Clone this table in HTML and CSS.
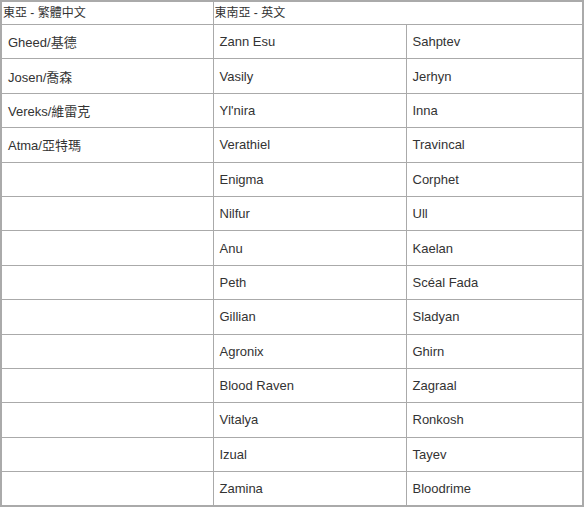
FILE: index.html
```html
<!DOCTYPE html>
<html>
<head>
<meta charset="utf-8">
<link rel="stylesheet" href="styles.css">
</head>
<body>
<table class="servers">
  <colgroup>
    <col class="c1"><col class="c2"><col class="c3">
  </colgroup>
  <thead>
    <tr class="head"><th>東亞 - 繁體中文</th><th colspan="2">東南亞 - 英文</th></tr>
  </thead>
  <tbody>
    <tr><td>Gheed/基德</td><td>Zann Esu</td><td>Sahptev</td></tr>
    <tr><td>Josen/喬森</td><td>Vasily</td><td>Jerhyn</td></tr>
    <tr><td>Vereks/維雷克</td><td>Yl'nira</td><td>Inna</td></tr>
    <tr><td>Atma/亞特瑪</td><td>Verathiel</td><td>Travincal</td></tr>
    <tr><td></td><td>Enigma</td><td>Corphet</td></tr>
    <tr><td></td><td>Nilfur</td><td>Ull</td></tr>
    <tr><td></td><td>Anu</td><td>Kaelan</td></tr>
    <tr><td></td><td>Peth</td><td>Scéal Fada</td></tr>
    <tr><td></td><td>Gillian</td><td>Sladyan</td></tr>
    <tr><td></td><td>Agronix</td><td>Ghirn</td></tr>
    <tr><td></td><td>Blood Raven</td><td>Zagraal</td></tr>
    <tr><td></td><td>Vitalya</td><td>Ronkosh</td></tr>
    <tr><td></td><td>Izual</td><td>Tayev</td></tr>
    <tr><td></td><td>Zamina</td><td>Bloodrime</td></tr>
  </tbody>
</table>
</body>
</html>
```
FILE: styles.css
```css
html, body {
  margin: 0;
  padding: 0;
  background: #fff;
}
.servers {
  width: 584px;
  border-collapse: collapse;
  border: 2px solid #aaa;
  font-family: "Liberation Sans", Arial, "Noto Sans CJK TC", sans-serif;
  color: #333;
  table-layout: fixed;
}
.c1 { width: 212px; }
.c2 { width: 193px; }
.c3 { width: auto; }
.servers th,
.servers td {
  border: 1px solid #aaa;
  text-align: left;
}
.head th {
  font-weight: normal;
  font-size: 12px;
  padding: 0 1px;
  height: 22px;
  line-height: 22px;
}
.servers td {
  font-size: 13px;
  padding: 0 6px;
  height: 33.4px;
  vertical-align: middle;
}
```
